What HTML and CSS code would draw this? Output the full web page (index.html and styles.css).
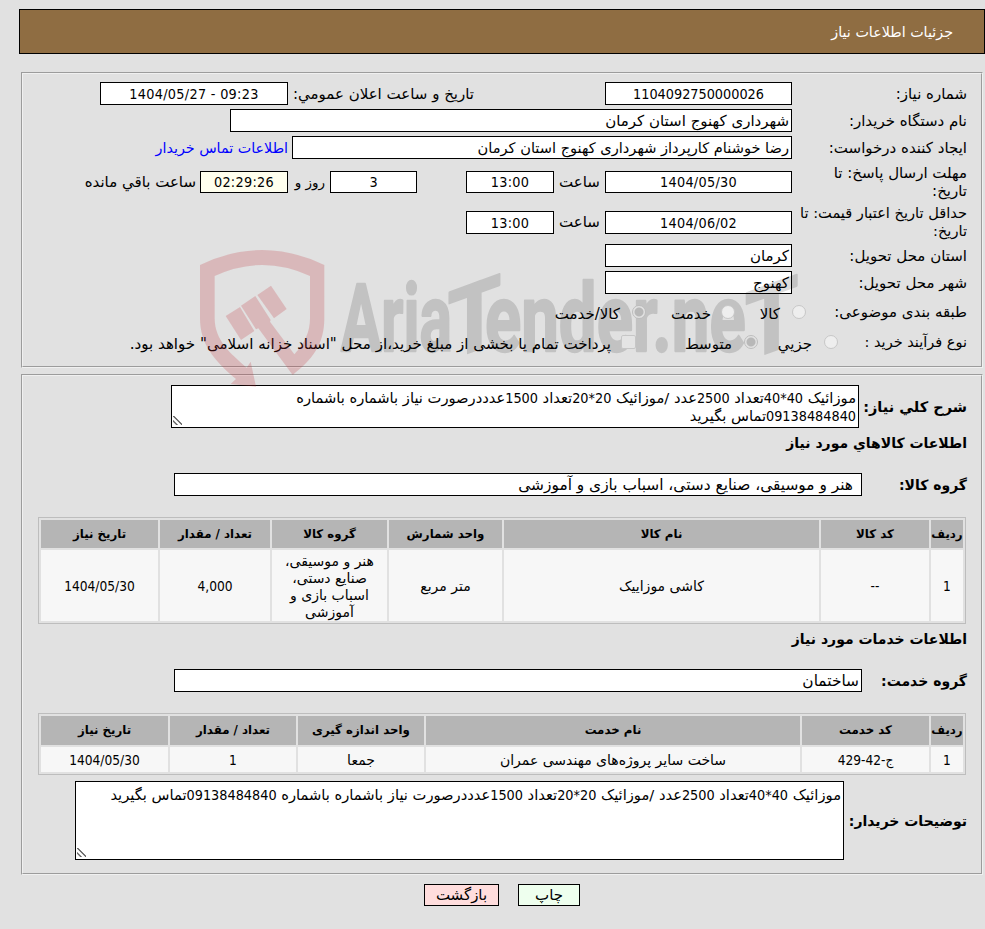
FILE: index.html
```html
<!DOCTYPE html>
<html lang="fa" dir="rtl">
<head>
    <meta charset="UTF-8">
    <title>جزئیات اطلاعات نیاز</title>
    <link rel="stylesheet" href="styles.css">
</head>
<body>
    <div class="page-title">جزئیات اطلاعات نیاز</div>

    <section class="panel need-info">
        <div class="row">
            <label class="caption">شماره نیاز:</label>
            <div class="field w-main center num">1104092750000026</div>
            <label class="announce">تاریخ و ساعت اعلان عمومي:</label>
            <div class="field w-announce center num date" dir="ltr">1404/05/27 - 09:23</div>
        </div>
        <div class="row">
            <label class="caption">نام دستگاه خریدار:</label>
            <div class="field w-org">شهرداری کهنوج استان کرمان</div>
        </div>
        <div class="row">
            <label class="caption">ایجاد کننده درخواست:</label>
            <div class="field w-creator">رضا خوشنام کارپرداز شهرداری کهنوج استان کرمان</div>
            <a class="contact" href="#">اطلاعات تماس خریدار</a>
        </div>
        <div class="row tall">
            <label class="caption two-line">مهلت ارسال پاسخ: تا<br>تاریخ:</label>
            <div class="field short w-main center num date">1404/05/30</div>
            <span class="at">ساعت</span>
            <div class="field short w-time center num date">13:00</div>
            <div class="field short w-days center num">3</div>
            <span class="days">روز و</span>
            <div class="field short w-time center num date countdown">02:29:26</div>
            <span class="remain">ساعت باقي مانده</span>
        </div>
        <div class="row tall price">
            <label class="caption two-line">حداقل تاریخ اعتبار قیمت: تا<br>تاریخ:</label>
            <div class="field w-main center num date">1404/06/02</div>
            <span class="at">ساعت</span>
            <div class="field w-time center num date">13:00</div>
        </div>
        <div class="row">
            <label class="caption">استان محل تحویل:</label>
            <div class="field w-main">کرمان</div>
        </div>
        <div class="row">
            <label class="caption">شهر محل تحویل:</label>
            <div class="field w-main">کهنوج</div>
        </div>
        <div class="row category">
            <label class="caption">طبقه بندی موضوعی:</label>
            <label class="option goods"><input type="radio" name="cat" disabled><span>کالا</span></label>
            <label class="option service"><input type="radio" name="cat" disabled><span>خدمت</span></label>
            <label class="option both"><input type="radio" name="cat" disabled checked><span>کالا/خدمت</span></label>
        </div>
        <div class="row process">
            <label class="caption">نوع فرآیند خرید :</label>
            <label class="option minor"><input type="radio" name="size" disabled><span>جزیي</span></label>
            <label class="option medium"><input type="radio" name="size" disabled checked><span>متوسط</span></label>
            <label class="option treasury"><input type="checkbox" disabled><span>پرداخت تمام یا بخشی از مبلغ خرید،از محل "اسناد خزانه اسلامی" خواهد بود.</span></label>
        </div>
    </section>

    <section class="panel need-items">
        <div class="line summary">
            <label class="strong">شرح کلي نیاز:</label>
            <div class="area">موزائیک <span class="num">40*40</span>تعداد <span class="num">2500</span>عدد /موزائیک <span class="num">20*20</span>تعداد <span class="num">1500</span>عدددرصورت نیاز باشماره باشماره<br><span class="num">09138484840</span>تماس بگیرید</div>
        </div>
        <h3>اطلاعات کالاهاي مورد نیاز</h3>
        <div class="line group">
            <label class="strong">گروه کالا:</label>
            <div class="field w-group goods-group">هنر و موسیقی، صنایع دستی، اسباب بازی و آموزشی</div>
        </div>

        <table class="grid goods-table">
            <colgroup>
                <col class="c32"><col class="c108"><col class="c315"><col class="c113"><col class="c115"><col class="c110"><col class="c117">
            </colgroup>
            <tr>
                <th>ردیف</th>
                <th>کد کالا</th>
                <th>نام کالا</th>
                <th>واحد شمارش</th>
                <th>گروه کالا</th>
                <th>تعداد / مقدار</th>
                <th>تاریخ نیاز</th>
            </tr>
            <tr>
                <td class="num">1</td>
                <td class="num">--</td>
                <td>کاشی موزاییک</td>
                <td>متر مربع</td>
                <td>هنر و موسیقی،<br>صنایع دستی،<br>اسباب بازی و<br>آموزشی</td>
                <td class="num">4,000</td>
                <td class="num">1404/05/30</td>
            </tr>
        </table>

        <h3>اطلاعات خدمات مورد نیاز</h3>
        <div class="line group">
            <label class="strong">گروه خدمت:</label>
            <div class="field w-group">ساختمان</div>
        </div>

        <table class="grid service-table">
            <colgroup>
                <col class="c32"><col class="c127"><col class="c374"><col class="c126"><col class="c126"><col class="c127">
            </colgroup>
            <tr>
                <th>ردیف</th>
                <th>کد خدمت</th>
                <th>نام خدمت</th>
                <th>واحد اندازه گیری</th>
                <th>تعداد / مقدار</th>
                <th>تاریخ نیاز</th>
            </tr>
            <tr>
                <td class="num">1</td>
                <td class="num">ج-42-429</td>
                <td>ساخت سایر پروژه‌های مهندسی عمران</td>
                <td>جمعا</td>
                <td class="num">1</td>
                <td class="num">1404/05/30</td>
            </tr>
        </table>

        <div class="line notes">
            <label class="strong">توضیحات خریدار:</label>
            <div class="area">موزائیک <span class="num">40*40</span>تعداد <span class="num">2500</span>عدد /موزائیک <span class="num">20*20</span>تعداد <span class="num">1500</span>عدددرصورت نیاز باشماره باشماره <span class="num">09138484840</span>تماس بگیرید</div>
        </div>
    </section>

    <div class="actions">
        <button class="btn print">چاپ</button>
        <button class="btn back">بازگشت</button>
    </div>

    <!-- site watermark -->
    <svg class="watermark" viewBox="0 0 1890 480" direction="ltr">
        <g class="shield">
            <path d="M60 90 Q247 0 433 90 V250 C433 330 395 375 338 420 L235 280 L228 283 L183 212 L226 183 L272 255 L270 260 L343 358 C375 325 390 290 390 250 V123 Q247 57 104 123 V250 C104 315 150 355 200 398 L212 380 L228 455 L152 447 L168 432 C100 375 60 325 60 250 Z"/>
            <path d="M137 243 L180 216 L223 288 L183 315 Z"/>
            <path d="M232 180 L273 152 L320 222 L282 250 Z"/>
        </g>
        <g class="wordmark">
            <text x="482" y="348" textLength="334" lengthAdjust="spacingAndGlyphs">Aria</text>
            <text transform="translate(803 376) skewY(-20)" x="0" y="0" textLength="160" lengthAdjust="spacingAndGlyphs">T</text>
            <text x="915" y="348" textLength="782" lengthAdjust="spacingAndGlyphs">ender.ne</text>
            <text transform="translate(1695 378) skewY(-20)" x="0" y="0" textLength="160" lengthAdjust="spacingAndGlyphs">T</text>
        </g>
    </svg>
</body>
</html>
```
FILE: styles.css
```css
* {
    box-sizing: border-box;
}

body {
    margin: 0;
    padding: 9px 0 0;
    height: 929px;
    overflow: hidden;
    position: relative;
    background: #e1e1e1;
    color: #000;
    font-family: "DejaVu Sans", sans-serif;
    font-size: 15px;
    line-height: 18px;
    white-space: nowrap;
}

.num {
    font-family: "DejaVu Sans Condensed", "DejaVu Sans", sans-serif;
    font-stretch: condensed;
    font-size: 14.3px;
}

.date {
    letter-spacing: 0.3px;
}

.page-title {
    height: 45px;
    margin-left: 19px;
    padding-right: 31px;
    border: 1px solid #000;
    background: #8f6d42;
    color: #fff;
    font-size: 14.3px;
    line-height: 44px;
}

.panel {
    width: 962px;
    margin-right: 2px;
    border: 2px groove #f0f0f0;
    padding: 6px 14px 0;
}

.need-info {
    height: 296px;
    margin-top: 18px;
}

.need-items {
    height: 501px;
    margin-top: 6px;
    padding-top: 9px;
}

.row {
    display: flex;
    align-items: center;
    height: 27px;
}

.row.tall {
    height: 41px;
}

.row.price {
    height: 40px;
}

.row.category {
    height: 31px;
}

.row.process {
    height: 29px;
}

.caption {
    width: 175px;
    flex: none;
}

.two-line {
    line-height: 18px;
}

.price .caption {
    font-size: 14.6px;
}

.field {
    flex: none;
    height: 23px;
    border: 1px solid #000;
    background: #fff;
    padding: 0 2px;
    line-height: 22px;
}

.field.short {
    height: 22px;
    line-height: 21px;
}

.center {
    text-align: center;
}

.w-main {
    width: 187px;
}

.w-announce {
    width: 188px;
}

.w-org {
    width: 562px;
}

.w-creator {
    width: 500px;
    font-size: 14.6px;
}

.w-time {
    width: 88px;
}

.w-days {
    width: 87px;
    margin-right: 49px;
}

.w-group {
    width: 688px;
    font-size: 15.4px;
}

.announce {
    width: 186px;
    margin-right: 131px;
}

.contact {
    margin-right: 4px;
    color: #00f;
    font-size: 14.3px;
    text-decoration: none;
}

.at {
    width: 51px;
    text-align: center;
}

.days {
    width: 42px;
    padding-right: 5px;
    font-size: 13.5px;
}

.remain {
    margin-right: 4px;
}

.countdown {
    background: #ffffee;
}

.option {
    display: flex;
    align-items: center;
    gap: 12px;
}

.option span {
    position: relative;
    top: 2px;
}

.option input {
    appearance: none;
    position: relative;
    z-index: 1;
    flex: none;
    width: 14px;
    height: 14px;
    margin: 0;
    border: 1px solid #c6c6c6;
    border-radius: 50%;
    background: #eee;
}

.option input:checked {
    border-color: #bdbdbd;
    background: radial-gradient(circle, #b8b8b8 4px, #e2e2e2 5px);
}

.option input[type="checkbox"] {
    width: 15px;
    border-radius: 2px;
    background: #e4e4e4;
}

.category .caption {
    width: 161px;
}

.process .caption {
    width: 129px;
    font-size: 14.5px;
}

.goods {
    width: 71px;
}

.service {
    width: 89px;
    gap: 10px;
}

.minor {
    width: 80px;
}

.medium {
    width: 122px;
}

.treasury {
    gap: 10px;
    font-size: 15.1px;
}

.line {
    display: flex;
    align-items: center;
}

.strong,
h3 {
    font-weight: bold;
    font-size: 14px;
}

h3 {
    margin: 0;
    height: 30px;
    line-height: 30px;
}

.area {
    position: relative;
    border: 1px solid #000;
    background: #fff;
    padding: 3px 2px;
    overflow: hidden;
    font-size: 14.7px;
}

/* resize grip */
.area::after {
    content: "";
    position: absolute;
    left: 1px;
    bottom: 2px;
    width: 9px;
    height: 9px;
    background: linear-gradient(45deg, transparent 2px, #666 2.4px, #666 3.4px, transparent 3.8px, transparent 5.6px, #666 6px, #666 7px, transparent 7.4px);
}

.summary .strong {
    width: 108px;
    font-size: 14.5px;
}

.summary .area {
    width: 688px;
    height: 43px;
}

.group {
    height: 53px;
}

.group .strong {
    width: 105px;
}

.goods-group {
    padding-right: 8px;
}

.notes {
    margin-top: 6px;
}

.notes .strong {
    width: 123px;
}

.notes .area {
    width: 769px;
    height: 79px;
    padding-top: 4px;
}

.grid {
    width: 928px;
    margin-right: 1px;
    table-layout: fixed;
    border: 1px solid #bdbdbd;
    border-collapse: separate;
    border-spacing: 2px;
    font-size: 14px;
    line-height: 17px;
    text-align: center;
}

.grid th {
    padding: 0;
    background: #b5b5b5;
    font-size: 11.8px;
}

.grid td {
    padding: 2px 0 0;
    background: #f7f7f7;
}

.grid .num {
    font-size: 13.6px;
}

.goods-table {
    margin-top: 6px;
}

.goods-table th {
    height: 28px;
}

.goods-table td {
    height: 71px;
}

.service-table {
    margin-top: 6px;
}

.service-table th {
    height: 29px;
}

.service-table td {
    height: 25px;
}

.c32 { width: 32px; }
.c108 { width: 108px; }
.c110 { width: 110px; }
.c113 { width: 113px; }
.c115 { width: 115px; }
.c117 { width: 117px; }
.c126 { width: 126px; }
.c127 { width: 127px; }
.c315 { width: 315px; }
.c374 { width: 374px; }

.actions {
    display: flex;
    gap: 19px;
    margin: 9px 405px 0 0;
}

.btn {
    height: 22px;
    padding: 0;
    border: 1px solid #000;
    color: #000;
    font: inherit;
    line-height: 20px;
}

.print {
    width: 62px;
    background: #eeffee;
}

.back {
    width: 75px;
    background: #ffdddd;
}

.watermark {
    position: absolute;
    left: 180px;
    top: 235px;
    width: 630px;
    height: 160px;
    pointer-events: none;
}

.shield {
    fill: rgba(190, 40, 50, 0.22);
}

.wordmark {
    fill: #000;
    stroke: #000;
    stroke-width: 7;
    stroke-linejoin: round;
    opacity: 0.14;
    font-family: Roboto, sans-serif;
    font-weight: bold;
    font-size: 284px;
}
```
